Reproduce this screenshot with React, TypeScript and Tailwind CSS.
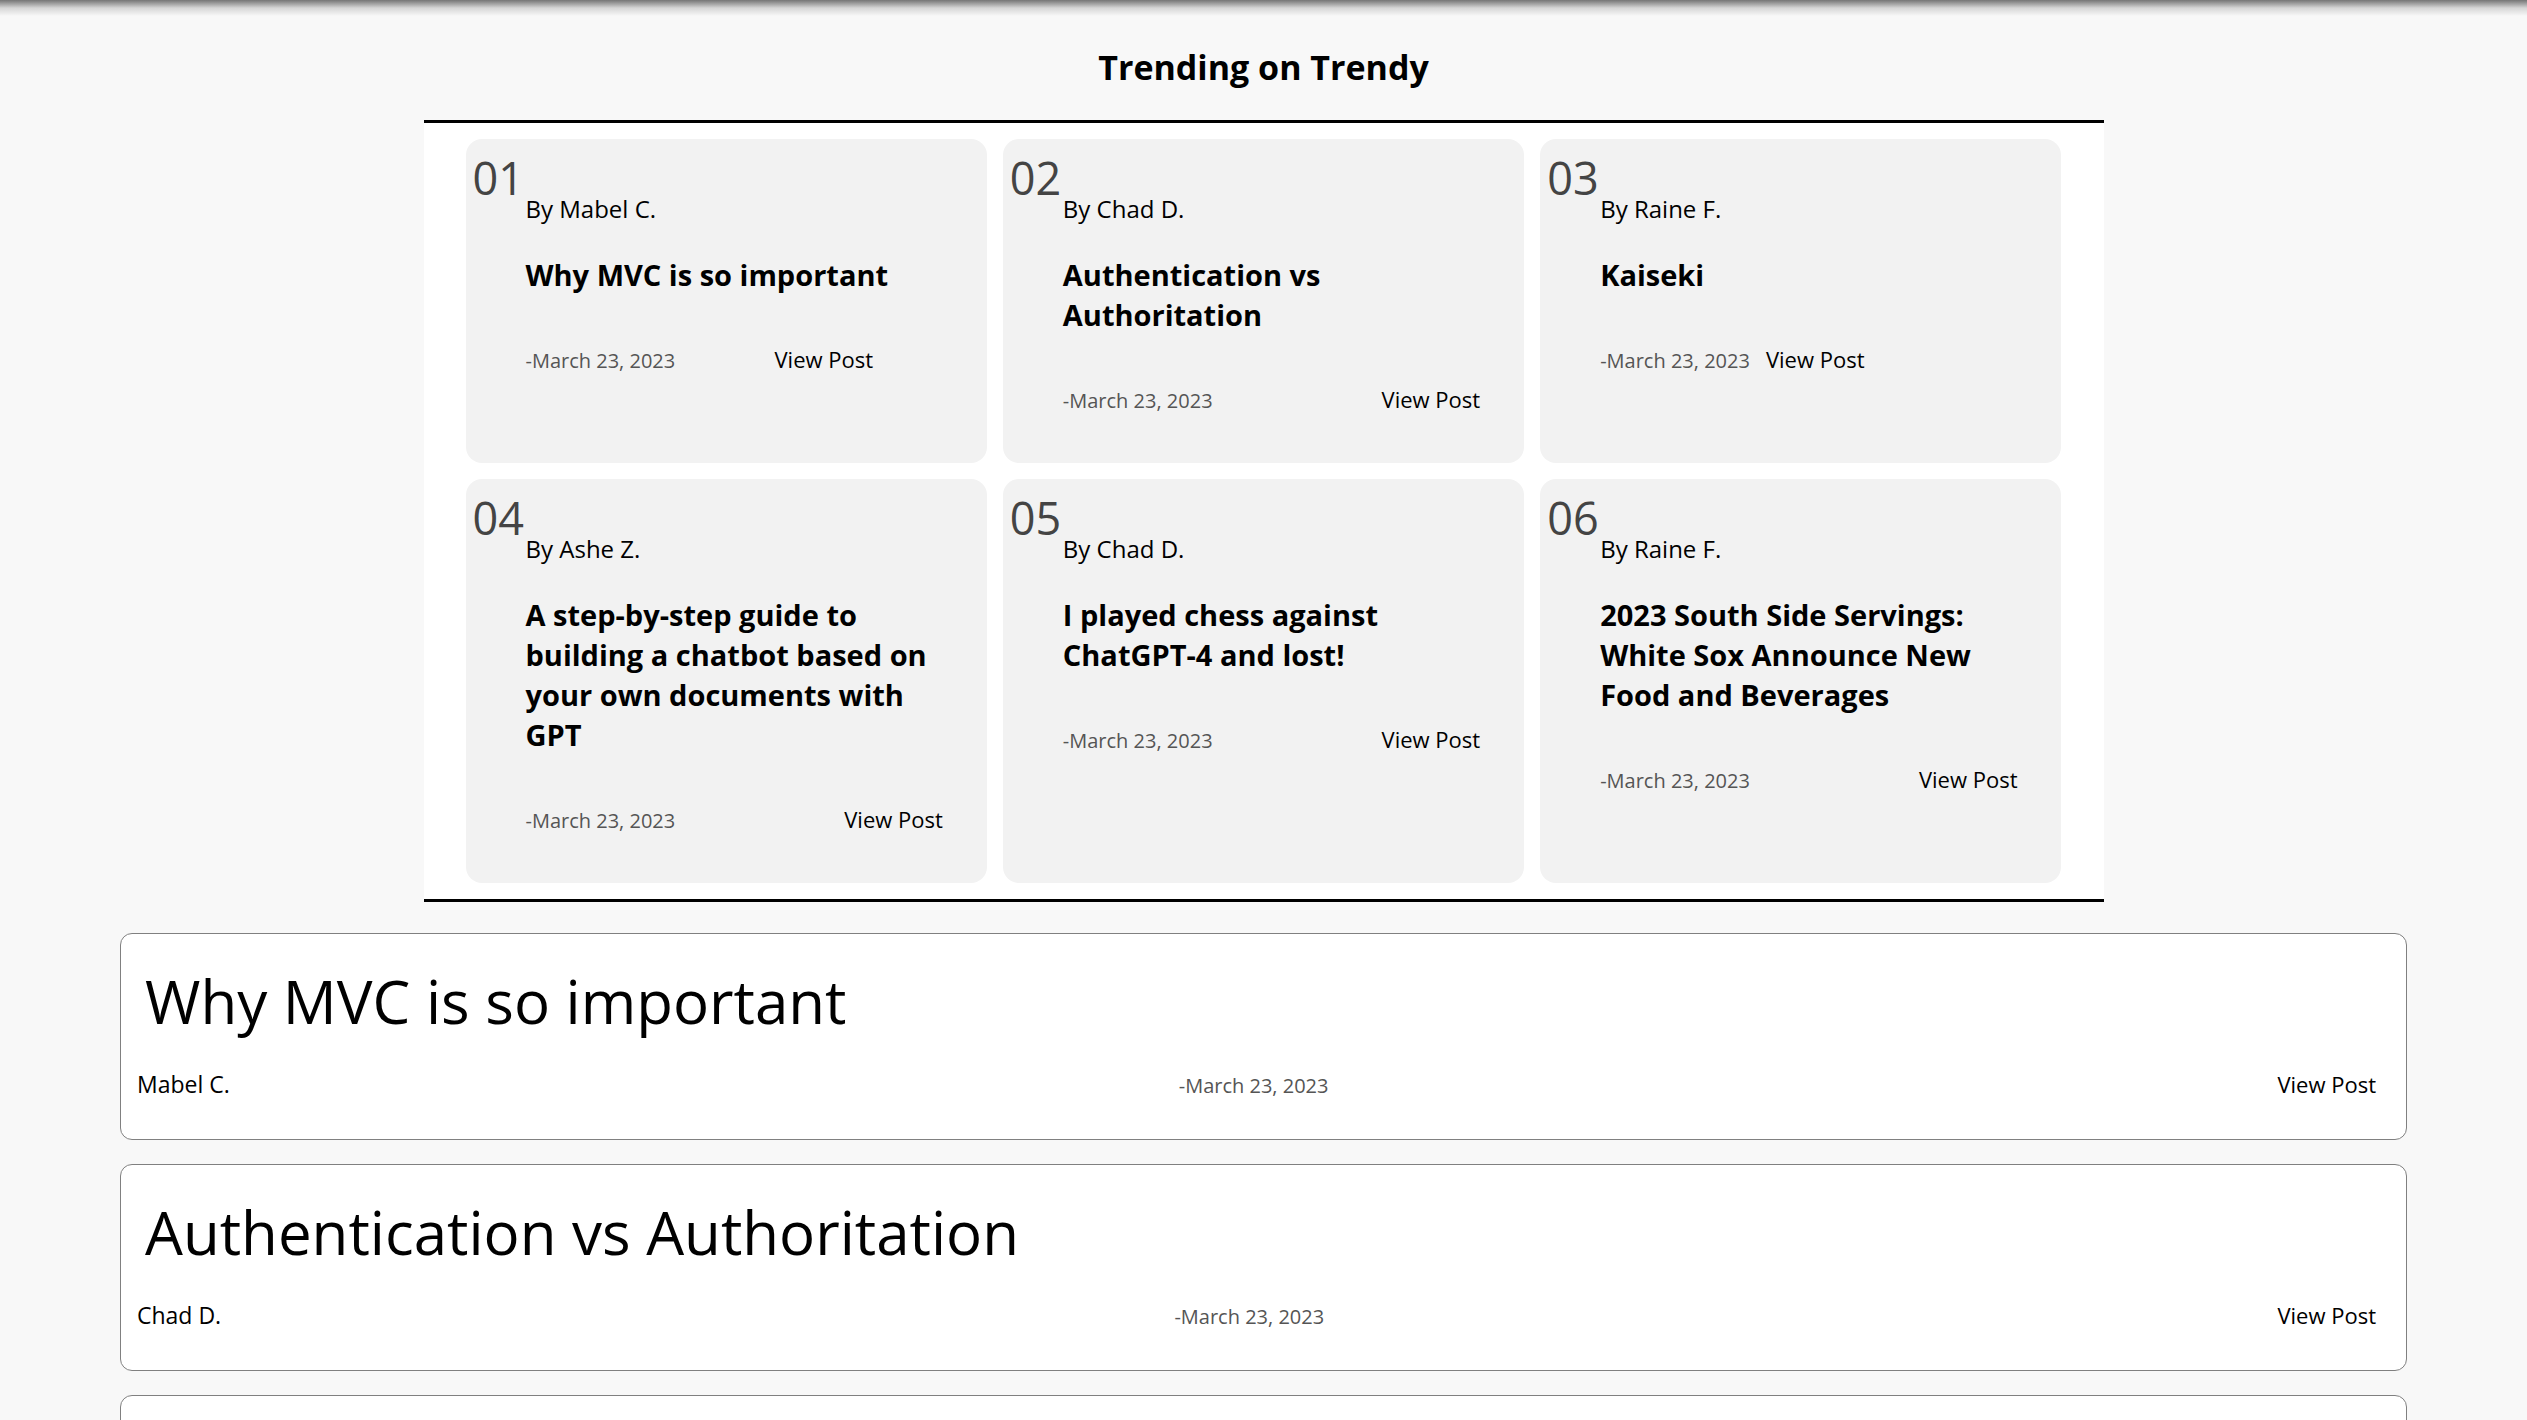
import React from "react";

type Post = { n: string; author: string; title: string };

const posts: Post[] = [
  { n: "01", author: "Mabel C.", title: "Why MVC is so important" },
  { n: "02", author: "Chad D.", title: "Authentication vs Authoritation" },
  { n: "03", author: "Raine F.", title: "Kaiseki" },
  {
    n: "04",
    author: "Ashe Z.",
    title: "A step-by-step guide to building a chatbot based on your own documents with GPT",
  },
  { n: "05", author: "Chad D.", title: "I played chess against ChatGPT-4 and lost!" },
  {
    n: "06",
    author: "Raine F.",
    title: "2023 South Side Servings: White Sox Announce New Food and Beverages",
  },
];

function TrendingCard({ post }: { post: Post }) {
  return (
    <div className="flex rounded-2xl bg-[#f2f2f2] pl-[7px] pr-[29px] pt-[16px] pb-[47px]">
      <div className="w-[53px] shrink-0 text-[45px] leading-none text-[#444444]">{post.n}</div>
      <div className="mt-[38px] min-w-0">
        <div className="text-[24px] leading-[32px] text-black">By {post.author}</div>
        <h3 className="mt-[30px] text-[29px] font-bold leading-[40px] text-black">{post.title}</h3>
        <div className="mt-[49px] flex items-baseline justify-between gap-4 pr-[15px]">
          <span className="text-[20px] leading-[30px] text-[#555555]">-March 23, 2023</span>
          <a className="text-[22px] leading-[30px] text-black">View Post</a>
        </div>
      </div>
    </div>
  );
}

function ListCard({ post }: { post: Post }) {
  return (
    <div className="rounded-xl border border-[#808080] bg-white pt-[27px] pb-[38px] pl-4 pr-[30px]">
      <h2 className="pl-2 text-[60px] leading-[80px] text-black">{post.title}</h2>
      <div className="mt-[28px] flex items-baseline justify-between">
        <span className="text-[23px] leading-[30px] text-black">{post.author}</span>
        <span className="text-[20px] leading-[30px] text-[#555555]">-March 23, 2023</span>
        <a className="text-[22px] leading-[30px] text-black">View Post</a>
      </div>
    </div>
  );
}

export default function App() {
  return (
    <div className="min-h-screen bg-[#f8f8f8] font-['Open_Sans',sans-serif] text-black">
      <div className="h-4 bg-linear-to-b from-[#767676] via-[#d6d6d6] to-[#f8f8f8]" />
      <h1 className="mt-[28px] mb-[30px] text-center text-[34px] font-bold leading-[46px]">
        Trending on Trendy
      </h1>
      <section className="mx-auto w-[1680px] border-y-[3px] border-black bg-white px-[42px] py-4">
        <div className="grid grid-cols-3 gap-4">
          {posts.map((p) => (
            <TrendingCard key={p.n} post={p} />
          ))}
        </div>
      </section>
      <div className="mt-[31px] flex flex-col gap-6 px-[120px] pb-6">
        {posts.map((p) => (
          <ListCard key={p.n} post={p} />
        ))}
      </div>
    </div>
  );
}
